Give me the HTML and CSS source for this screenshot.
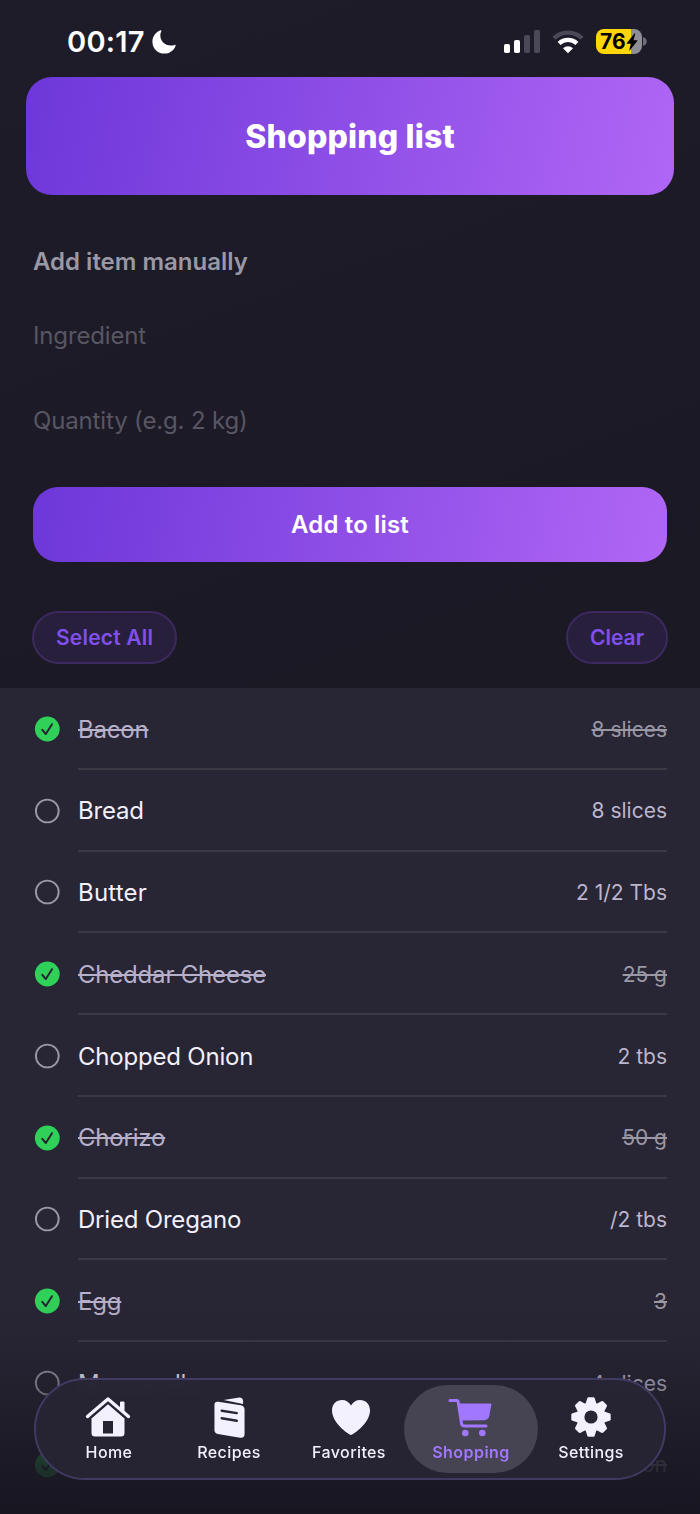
FILE: index.html
```
<!DOCTYPE html>
<html lang="en">
<head>
<meta charset="utf-8">
<title>Shopping list</title>
<link rel="stylesheet" href="styles.css">
</head>
<body>
<div class="screen">
  <header class="status">
    <div class="status-left">
      <span class="clock">00:17</span>
      <svg class="moon" width="24" height="24" viewBox="0 0 24 24"><path d="M8.600.3C3.700 2.200.4 6.600.4 11.700.4 18.400 5.700 23.600 12.300 23.600c5.100 0 9.500-3.100 11.200-7.700.3-.9-.2-1.300-1-1-1.100.4-2.300.6-3.600.6-6.400 0-10.600-4.100-10.600-10.400 0-1.400.4-2.700.9-3.700.4-.8 0-1.300-.6-1.100z" fill="#fff"/></svg>
    </div>
    <div class="status-right">
      <svg width="36" height="24" viewBox="0 0 36 24"><rect x="0" y="14" width="6" height="9" rx="1.800" fill="#fff"/><rect x="10" y="10" width="6" height="13" rx="1.800" fill="#fff"/><rect x="20" y="5" width="6" height="18" rx="1.800" fill="#4b4957"/><rect x="30" y="0" width="6" height="23" rx="1.800" fill="#4b4957"/></svg>
      <svg width="32" height="24" viewBox="0 0 32 24" fill="none"><path d="M2 8.300a20 20 0 0 1 28 0" stroke="#4b4957" stroke-width="4.400"/><path d="M7.100 13.500a12.800 12.800 0 0 1 17.800 0" stroke="#fff" stroke-width="4.400"/><path d="M16 23.200l-5-4.900a7.200 7.200 0 0 1 10 0z" fill="#fff"/></svg>
      <div class="battery"><div class="battery-body"><span class="battery-num">76</span><svg width="12" height="18" viewBox="0 0 12 18"><path d="M8.500.5L.8 10c-.3.4-.1.700.4.700h3.600L3.300 17c-.2.700.2.800.6.300L11.300 8c.3-.4.1-.8-.4-.8H7.500L9.200 1c.2-.7-.3-.9-.7-.5z" fill="#000"/></svg></div><svg width="4" height="9" viewBox="0 0 4 9"><path d="M0 0C5 1.500 5 7.500 0 9z" fill="#6e6c78"/></svg></div>
    </div>
  </header>

  <h1 class="banner">Shopping list</h1>

  <form class="add">
    <h2 class="add-title">Add item manually</h2>
    <div class="field ingredient">Ingredient</div>
    <div class="field quantity">Quantity (e.g. 2 kg)</div>
    <button class="add-btn" type="button">Add to list</button>
  </form>

  <div class="actions">
    <button class="pill select" type="button">Select All</button>
    <button class="pill" type="button">Clear</button>
  </div>

  <svg class="defs" width="0" height="0"><symbol id="done" viewBox="0 0 26 26"><circle cx="13.300" cy="13" r="12.400" fill="#30d158"/><path d="M8.300 13.800l3.500 4.200 6.200-9.800" fill="none" stroke="#282534" stroke-width="2" stroke-linecap="round" stroke-linejoin="round"/></symbol><symbol id="open" viewBox="0 0 26 26"><circle cx="13.300" cy="13" r="11.400" fill="none" stroke="#9a98a5" stroke-width="1.900"/></symbol></svg>
  <ul class="list">
    <li class="item done"><svg class="mark"><use href="#done"/></svg><div class="line"><span class="name">Bacon</span><span class="qty">8 slices</span></div></li>
    <li class="item"><svg class="mark"><use href="#open"/></svg><div class="line"><span class="name">Bread</span><span class="qty">8 slices</span></div></li>
    <li class="item"><svg class="mark"><use href="#open"/></svg><div class="line"><span class="name butter">Butter</span><span class="qty">2 1/2 Tbs</span></div></li>
    <li class="item done"><svg class="mark"><use href="#done"/></svg><div class="line"><span class="name">Cheddar Cheese</span><span class="qty">25 g</span></div></li>
    <li class="item"><svg class="mark"><use href="#open"/></svg><div class="line"><span class="name">Chopped Onion</span><span class="qty">2 tbs</span></div></li>
    <li class="item done"><svg class="mark"><use href="#done"/></svg><div class="line"><span class="name">Chorizo</span><span class="qty">50 g</span></div></li>
    <li class="item"><svg class="mark"><use href="#open"/></svg><div class="line"><span class="name">Dried Oregano</span><span class="qty">/2 tbs</span></div></li>
    <li class="item done"><svg class="mark"><use href="#done"/></svg><div class="line"><span class="name">Egg</span><span class="qty">3</span></div></li>
    <li class="item"><svg class="mark"><use href="#open"/></svg><div class="line"><span class="name">Mozzarella</span><span class="qty">4 slices</span></div></li>
    <li class="item done"><svg class="mark"><use href="#done"/></svg><div class="line"><span class="name">Olive Oil</span><span class="qty">1 Teaspoon</span></div></li>
  </ul>

  <div class="fade"></div>
  <nav class="tabs">
    <a class="tab home"><span class="icon"><svg width="46" height="42" viewBox="0 0 46 42"><path d="M2.500 20.500L23 3 43.500 20.500" fill="none" stroke="#f4f1ff" stroke-width="3.400" stroke-linecap="round" stroke-linejoin="round"/><path d="M35.500 6h3.500v10L35.500 13z" fill="#f4f1ff" stroke="#f4f1ff" stroke-linejoin="round"/><path d="M23 8.200L6.500 22.500V37q0 3.500 3.500 3.500h26q3.500 0 3.500-3.500V22.500zM18 25h10v12.500H18z" fill="#f4f1ff" fill-rule="evenodd"/></svg></span><span>Home</span></a>
    <a class="tab recipes"><span class="icon"><svg width="33" height="43" viewBox="0 0 34 44"><path d="M11 4L25.500 1.600Q31 .7 31 5.500V8z" fill="#f4f1ff"/><path d="M5.500 5.800L28.500 9.500Q32.500 10.200 32.500 14v25q0 4.500-4.500 3.800L5 39q-3.500-.6-3.500-4V9q0-3.800 4-3.200z" fill="#f4f1ff"/><path d="M9 15l15.500 2.500M9 22.800l15.500 2.500" stroke="#282534" stroke-width="2.500" stroke-linecap="round"/></svg></span><span>Recipes</span></a>
    <a class="tab favorites"><span class="icon"><svg width="40" height="37" viewBox="0 0 40 37"><path d="M20 36C17 35 1 24 1 11.500 1 5 5.500 1 11 1c4 0 7 2 9 5.500C22 3 25 1 29 1c5.500 0 10 4 10 10.500C39 24 23 35 20 36z" fill="#f4f1ff"/></svg></span><span>Favorites</span></a>
    <a class="tab shopping"><span class="icon"><svg width="44" height="39" viewBox="0 0 44 39"><path d="M2 2.500h6.500q1.500 0 1.700 1.500l3.300 21.500q.4 2.500 3 2.500H38" fill="none" stroke="#a277ff" stroke-width="3" stroke-linecap="round"/><path d="M11 5.500h31.500q1 0 .9 1L41.300 18q-.8 4-5 4.200L13.500 22.500z" fill="#a277ff"/><circle cx="17.300" cy="35" r="3.300" fill="#a277ff"/><circle cx="34.300" cy="35" r="3.300" fill="#a277ff"/></svg></span><span>Shopping</span></a>
    <a class="tab settings"><span class="icon"><svg width="40" height="40" viewBox="-20 -20 40 40"><g fill="#f4f1ff"><circle r="14.500"/><path id="tooth" d="M-5.500-13L-3.800-18.500Q-3.400-19.700-2.300-19.700H2.300Q3.400-19.700 3.800-18.500L5.500-13z"/><use href="#tooth" transform="rotate(45)"/><use href="#tooth" transform="rotate(90)"/><use href="#tooth" transform="rotate(135)"/><use href="#tooth" transform="rotate(180)"/><use href="#tooth" transform="rotate(225)"/><use href="#tooth" transform="rotate(270)"/><use href="#tooth" transform="rotate(315)"/></g><circle r="6.600" fill="#282534"/></svg></span><span>Settings</span></a>
  </nav>
</div>
</body>
</html>
```
FILE: styles.css
```
* { box-sizing: border-box; }
body { margin: 0; background: #191722; font-family: Inter, "Liberation Sans", sans-serif; }
.screen { position: relative; width: 700px; height: 1514px; overflow: hidden; background: linear-gradient(160deg, #1f1c2a 0%, #1b1924 45%, #191722 100%); color: #f3f0fc; }
.defs { display: block; }

.status { height: 77px; padding: 6px 53px 0 67px; display: flex; align-items: center; justify-content: space-between; }
.status-left { display: flex; align-items: center; gap: 7px; }
.clock { font-size: 29px; font-weight: 575; color: #fff; line-height: 36px; letter-spacing: .25px; }
.status-right { display: flex; align-items: center; gap: 12px; }
.battery { display: flex; align-items: center; gap: 1px; }
.battery-body { width: 46px; height: 25px; border-radius: 8px; background: linear-gradient(90deg, #ffd60a 77%, #8f8d96 77%); display: flex; align-items: center; padding-left: 4px; color: #000; }
.battery-num { font-size: 21px; font-weight: 650; line-height: 25px; }

.banner { margin: 0 26px; height: 118px; border-radius: 26px; background: linear-gradient(102deg, #6d37d9, #b066f5); display: flex; align-items: center; justify-content: center; font-size: 32px; font-weight: 800; letter-spacing: .15px; color: #fff; }

.add { padding: 48px 33px 0; display: flex; flex-direction: column; }
.add-title { margin: 0; font-size: 24px; line-height: 38px; font-weight: 600; color: #9b98a5; }
.field { font-size: 24px; line-height: 38px; letter-spacing: -.15px; color: #585663; }
.ingredient { margin-top: 36px; }
.quantity { margin-top: 47px; }
.add-btn { margin-top: 47px; height: 75px; border: 0; border-radius: 25px; background: linear-gradient(100deg, #6d37d9, #b066f5); color: #fff; font: 575 24px Inter, sans-serif; letter-spacing: .15px; }

.actions { padding: 48.500px 32px 24.500px; display: flex; justify-content: space-between; }
.pill { height: 53px; padding: 0 22px; border: 2px solid #3b295f; border-radius: 27px; background: #271f3b; color: #814fed; font: 600 21px Inter, sans-serif; }
.select { letter-spacing: .2px; }

.list { margin: 0; padding: 0; list-style: none; background: #282534; }
.item { height: 81.75px; padding: 0 33px 0 34px; display: flex; align-items: center; gap: 18px; }
.mark { width: 26px; height: 26px; flex: none; }
.line { flex: 1; height: 100%; display: flex; align-items: center; justify-content: space-between; border-bottom: 2px solid #3b3944; padding-top: 2.300px; }
.name { font-size: 24px; letter-spacing: -.2px; }
.butter { letter-spacing: .2px; }
.qty { font-size: 21px; color: #bbb5cd; }
.done .name { color: #b7b0cb; text-decoration: line-through; }
.done .qty { color: #9b98a5; text-decoration: line-through; }

.fade { position: absolute; left: 0; right: 0; bottom: 0; height: 214px; background: linear-gradient(180deg, rgba(25,23,34,0), rgba(25,23,34,.1) 19%, rgba(25,23,34,.24) 35%, rgba(25,23,34,.82) 75%, #181621); }
.tabs { position: absolute; left: 34px; top: 1378px; width: 632px; height: 102px; border: 2px solid #413a62; border-radius: 51px; background: rgba(39,36,51,.98); backdrop-filter: blur(3px); display: flex; padding: 5px 0 0 13px; }
.tab { flex: none; display: flex; flex-direction: column; align-items: center; width: 120px; height: 88px; padding-top: 10px; font-size: 16px; font-weight: 550; line-height: 22px; letter-spacing: .4px; }
.icon { display: flex; align-items: center; justify-content: center; height: 46px; }
.home .icon { margin-left: -3px; }
.favorites .icon { height: 44px; margin: 0 0 2px 3px; }
.recipes .icon { height: 45px; margin-bottom: 1px; }
.home .icon, .settings .icon { height: 44px; margin-bottom: 2px; }
.shopping .icon { height: 45px; margin: 0 0 1px -2px; }
.shopping { width: 134px; margin-left: -5px; border-radius: 44px; background: #464353; color: #a277ff; font-weight: 600; letter-spacing: .45px; }
.settings { width: 106px; }
```
